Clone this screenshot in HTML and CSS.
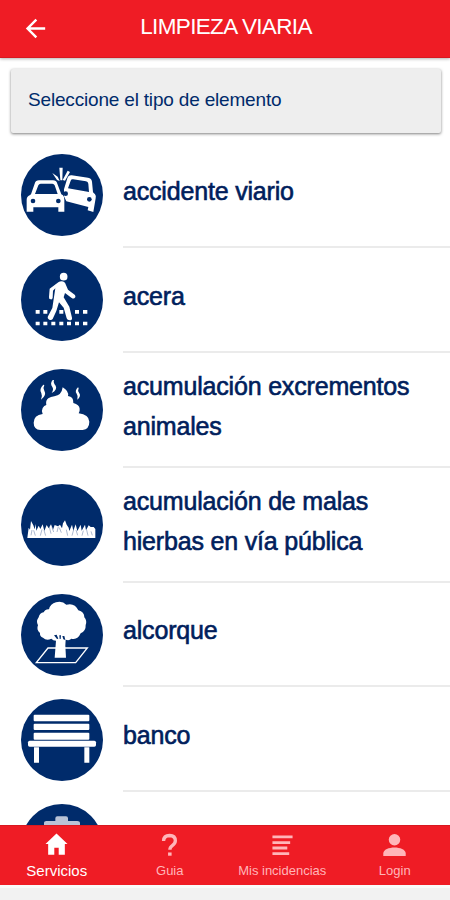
FILE: index.html
```html
<!DOCTYPE html>
<html lang="es">
<head>
    <meta charset="UTF-8">
    <meta name="viewport" content="width=device-width, initial-scale=1.0">
    <title>Limpieza viaria</title>
    <link rel="stylesheet" href="styles.css">
</head>
<body>
    <header class="header">
        <svg class="back" viewBox="0 0 24 24"><path d="M20 11H7.8l5.6-5.6L12 4l-8 8 8 8 1.4-1.4L7.8 13H20z"/></svg>
        <h1>LIMPIEZA VIARIA</h1>
    </header>
    <main class="content">
        <div class="card">Seleccione el tipo de elemento</div>
        <ul class="list">
            <li class="item">
                <svg class="icon" viewBox="34 27 246 246">
                    <circle class="disc" cx="157" cy="150" r="123"/>
                    <path d="M51 200v-36q0-9 9-13l4-3 11-32q3-10 13-10h42q10 0 13 10l12 32 5 3q4 4 4 13v36h-18v-13H71v13z"/>
                    <path d="M163 133l10-33q3-10 13-9l49 7q11 2 12 12l3 32 6 6q4 4 2 12l-7 41-17-5 2-10-66-17-7-15z"/>
                    <path class="disc" d="M76 147l10-26q2-5 7-5h35q5 0 7 5l9 26zM175 130l8-23q2-5 7-4l39 6q6 1 7 7l2 25z"/>
                    <g class="disc"><circle cx="70" cy="168" r="7"/><circle cx="146" cy="168" r="7"/><circle cx="168" cy="146" r="7"/><circle cx="239" cy="163" r="7"/></g>
                    <path d="M128 84l16 11 6 13-8-3zM149 68h10l-1 38h-6zM174 77l7 4-15 26-7-2z"/>
                </svg>
                <span class="label">accidente viario</span>
            </li>
            <li class="item">
                <svg class="icon" viewBox="34 27 246 246">
                    <circle class="disc" cx="157" cy="150" r="123"/>
                    <path d="M78 180h12v11H78zM101 180h12v11h-12zM149 180h12v11h-12zM196 180h12v11h-12zM220 180h13v11h-13zM78 215h12v11H78zM101 215h12v11h-12zM125 215h12v11h-12zM149 215h12v11h-12zM172 215h12v11h-12zM196 215h12v11h-12zM220 215h13v11h-13z"/>
                    <circle cx="162" cy="80" r="11.5"/>
                    <path d="M146 97q10-7 20 1l9 21 20 15q5 6-1 11-4 2-8-1l-20-15-4 13 17 28 8 33q1 8-7 8-7 0-9-6l-9-32-14-16-8 26-11 24q-4 5-10 2-7-3-4-10l13-25 6-40 3-19-7 7-1 21q-1 6-6 5-6 0-5-7l2-25z"/>
                </svg>
                <span class="label">acera</span>
            </li>
            <li class="item">
                <svg class="icon" viewBox="34 27 246 246">
                    <circle class="disc" cx="157" cy="150" r="123"/>
                    <path d="M92 210q-20-2-20-22 0-22 27-26-5-8 0-18 4-7 11-9-3-13 6-20 7-5 18-6 22-3 25-27 19 11 16 26 17 2 16 21 18 5 19 17 1 8-3 14 31 4 32 25 0 22-20 25z"/>
                    <path d="M101 74q-14 14-6 26 4 8-1 19 18-14 10-27-5-8 0-17zM129 60q-9 11-1 21 5 7-2 18 18-10 12-22-8-9-5-17zM205 82q-11 11-4 19 5 6 2 18 12-10 6-19-6-8-2-16z"/>
                </svg>
                <span class="label">acumulación excrementos animales</span>
            </li>
            <li class="item">
                <svg class="icon" viewBox="34 27 246 246">
                    <circle class="disc" cx="157" cy="150" r="123"/>
                    <path d="M53 189L57 158 61 164 64 138 71 151 75 163 78 147 80 167 87 152 92 162 99 148 104 168 111 150 117 160 124 148 130 164 135 150 145 154 151 149 157 160 160 145 166 136 171 149 177 158 179 168 187 149 191 167 198 148 203 168 213 149 216 167 226 149 229 166 237 151 243 156 252 156 257 162V189z"/>
                    <path class="blade" d="M64 181l3-16M77 182l-5-16M92 182l5-19M108 182l-5-16M124 176l-5-20M132 171l-5-14M142 171l4-16M155 173l-6-15M174 182l-4-18M187 182l5-18M204 181l-5-16M217 182l4-15M235 182l-4-17M248 181l-4-12"/>
                </svg>
                <span class="label">acumulación de malas hierbas en vía pública</span>
            </li>
            <li class="item">
                <svg class="icon" viewBox="34 27 246 246">
                    <circle class="disc" cx="157" cy="150" r="123"/>
                    <path class="plot" d="M115 189h118l-35 44H80z"/>
                    <path d="M118 73q4-17 21-21 19-5 31 7 25-7 36 17 18 5 18 21 9 11 4 23 1 18-15 25-9 21-28 16-6 7-17 3l-1 18 2 36h-34l4-51q-9 0-14-6-15 7-25-3-10-3-9-14-12-10-6-23-7-13 2-24 3-13 15-15 5-10 16-9z"/>
                    <path class="disc" d="M133 151l8-2 5 12-4 1zM149 151h5l-1 11h-3zM158 153h6l3 12-6-2z"/>
                </svg>
                <span class="label">alcorque</span>
            </li>
            <li class="item">
                <svg class="icon" viewBox="34 27 246 246">
                    <circle class="disc" cx="157" cy="150" r="123"/>
                    <rect x="72" y="74" width="167" height="20" rx="3"/>
                    <rect x="72" y="101" width="167" height="19" rx="3"/>
                    <rect x="72" y="128" width="167" height="21" rx="3"/>
                    <rect x="55" y="152" width="204" height="18" rx="5"/>
                    <path d="M73 172h15v46H73zM224 172h15v46h-15z"/>
                </svg>
                <span class="label">banco</span>
            </li>
            <li class="item">
                <svg class="icon" viewBox="34 27 246 246">
                    <circle class="disc" cx="157" cy="150" r="123"/>
                    <path class="bin" d="M103 83q0-5 7-5h27v-8q0-6 6-6h26q6 0 6 6v8h28q8 0 8 5v8H103z"/>
                    <path d="M112 101h92l-9 118h-74z"/>
                </svg>
            </li>
        </ul>
    </main>
    <nav class="tabs">
        <a class="tab active">
            <svg viewBox="0 0 24 24"><path d="M12 .5L.5 11.500H3.300V22.800H9.700V15.300h4.600V22.800h6.400V11.500h2.800z"/></svg>
            <span>Servicios</span>
        </a>
        <a class="tab">
            <svg viewBox="0 0 24 24"><path class="question" d="M5.800 8.300Q6 2.600 12.100 2.600q6 .2 6 5.500 0 2.800-3.200 5-2.500 1.700-2.500 4.300"/><path d="M10.500 20.300h3.700v3.400h-3.700z"/></svg>
            <span>Guia</span>
        </a>
        <a class="tab">
            <svg viewBox="0 0 24 24"><path d="M1.500 2.500h21v3h-21zM1.500 8.500h18.500v3h-18.500zM1.500 14.200h15.500v3h-15.500zM1.500 20h17.500v3h-17.500z"/></svg>
            <span>Mis incidencias</span>
        </a>
        <a class="tab">
            <svg viewBox="0 0 24 24"><circle cx="12" cy="7" r="6"/><path d="M.3 24v-2.500c0-4.200 6-6.300 11.700-6.300s11.700 2.100 11.700 6.300V24z"/></svg>
            <span>Login</span>
        </a>
    </nav>
    <div class="system-bar"></div>
</body>
</html>
```

FILE: styles.css
```css
* {
    margin: 0;
    padding: 0;
    box-sizing: border-box;
}
body {
    display: flex;
    flex-direction: column;
    height: 900px;
    overflow: hidden;
    background: #fff;
    color: #002b6b;
    font-family: "Liberation Sans", Arial, sans-serif;
}
.header {
    display: grid;
    grid-template-columns: 72px 1fr 72px;
    align-items: center;
    flex: none;
    height: 58px;
    padding-bottom: 3px;
    background: #ef1c25;
    border-bottom: 1px solid #d81820;
    box-shadow: 0 1px 3px rgba(0, 0, 0, 0.3);
    color: #fff;
}
.header h1 {
    padding-left: 2px;
    font-size: 22.5px;
    font-weight: normal;
    letter-spacing: -0.65px;
    text-align: center;
    white-space: nowrap;
}
.back {
    width: 29px;
    height: 29px;
    margin-left: 21px;
    margin-top: 2px;
    fill: #fff;
}
.content {
    flex: 1;
    min-height: 0;
    overflow: hidden;
    padding-top: 11px;
}
.card {
    height: 64px;
    margin: 0 9px 10px 11px;
    padding: 20px 17px;
    background: #eee;
    border-radius: 2px;
    box-shadow: 0 1px 3px rgba(0, 0, 0, 0.5);
    font-size: 19px;
    letter-spacing: -0.18px;
    line-height: 22px;
}
.list {
    list-style: none;
}
.item {
    display: flex;
    align-items: center;
    min-height: 104.8px;
    padding-left: 21px;
}
.icon {
    flex: none;
    width: 82px;
    height: 82px;
    margin-right: 20px;
    fill: #fff;
}
.disc {
    fill: #002b6b;
}
.blade {
    fill: none;
    stroke: #8296b8;
    stroke-width: 2;
}
.plot {
    fill: none;
    stroke: #fff;
    stroke-width: 4;
}
.bin {
    fill: #b9c3d7;
}
.label {
    flex: 1;
    display: flex;
    align-items: center;
    align-self: stretch;
    padding: 13px 30px 20px 0;
    border-bottom: 2px solid #ebebeb;
    color: #00205c;
    font-size: 25px;
    letter-spacing: -0.18px;
    line-height: 40px;
    -webkit-text-stroke: 0.6px #00205c;
}
.tabs {
    display: grid;
    grid-template-columns: repeat(4, 1fr);
    flex: none;
    height: 60px;
    background: #ef1c25;
    border-top: 1px solid #d81820;
    color: #ffb5b9;
}
.tab {
    display: flex;
    flex-direction: column;
    align-items: center;
    padding-top: 7px;
    padding-left: 2px;
    font-size: 13px;
    line-height: 16px;
    white-space: nowrap;
}
.tab svg {
    width: 23px;
    height: 23px;
    margin-bottom: 7px;
    fill: #ffb5b9;
}
.tab .question {
    fill: none;
    stroke: #ffb5b9;
    stroke-width: 3.5;
}
.tab.active {
    padding-left: 1px;
    color: #fff;
    font-size: 15px;
}
.tab.active svg {
    fill: #fff;
}
.system-bar {
    flex: none;
    height: 15px;
    border-top: 3px solid #fafafa;
    background: #f2f2f2;
}
```
